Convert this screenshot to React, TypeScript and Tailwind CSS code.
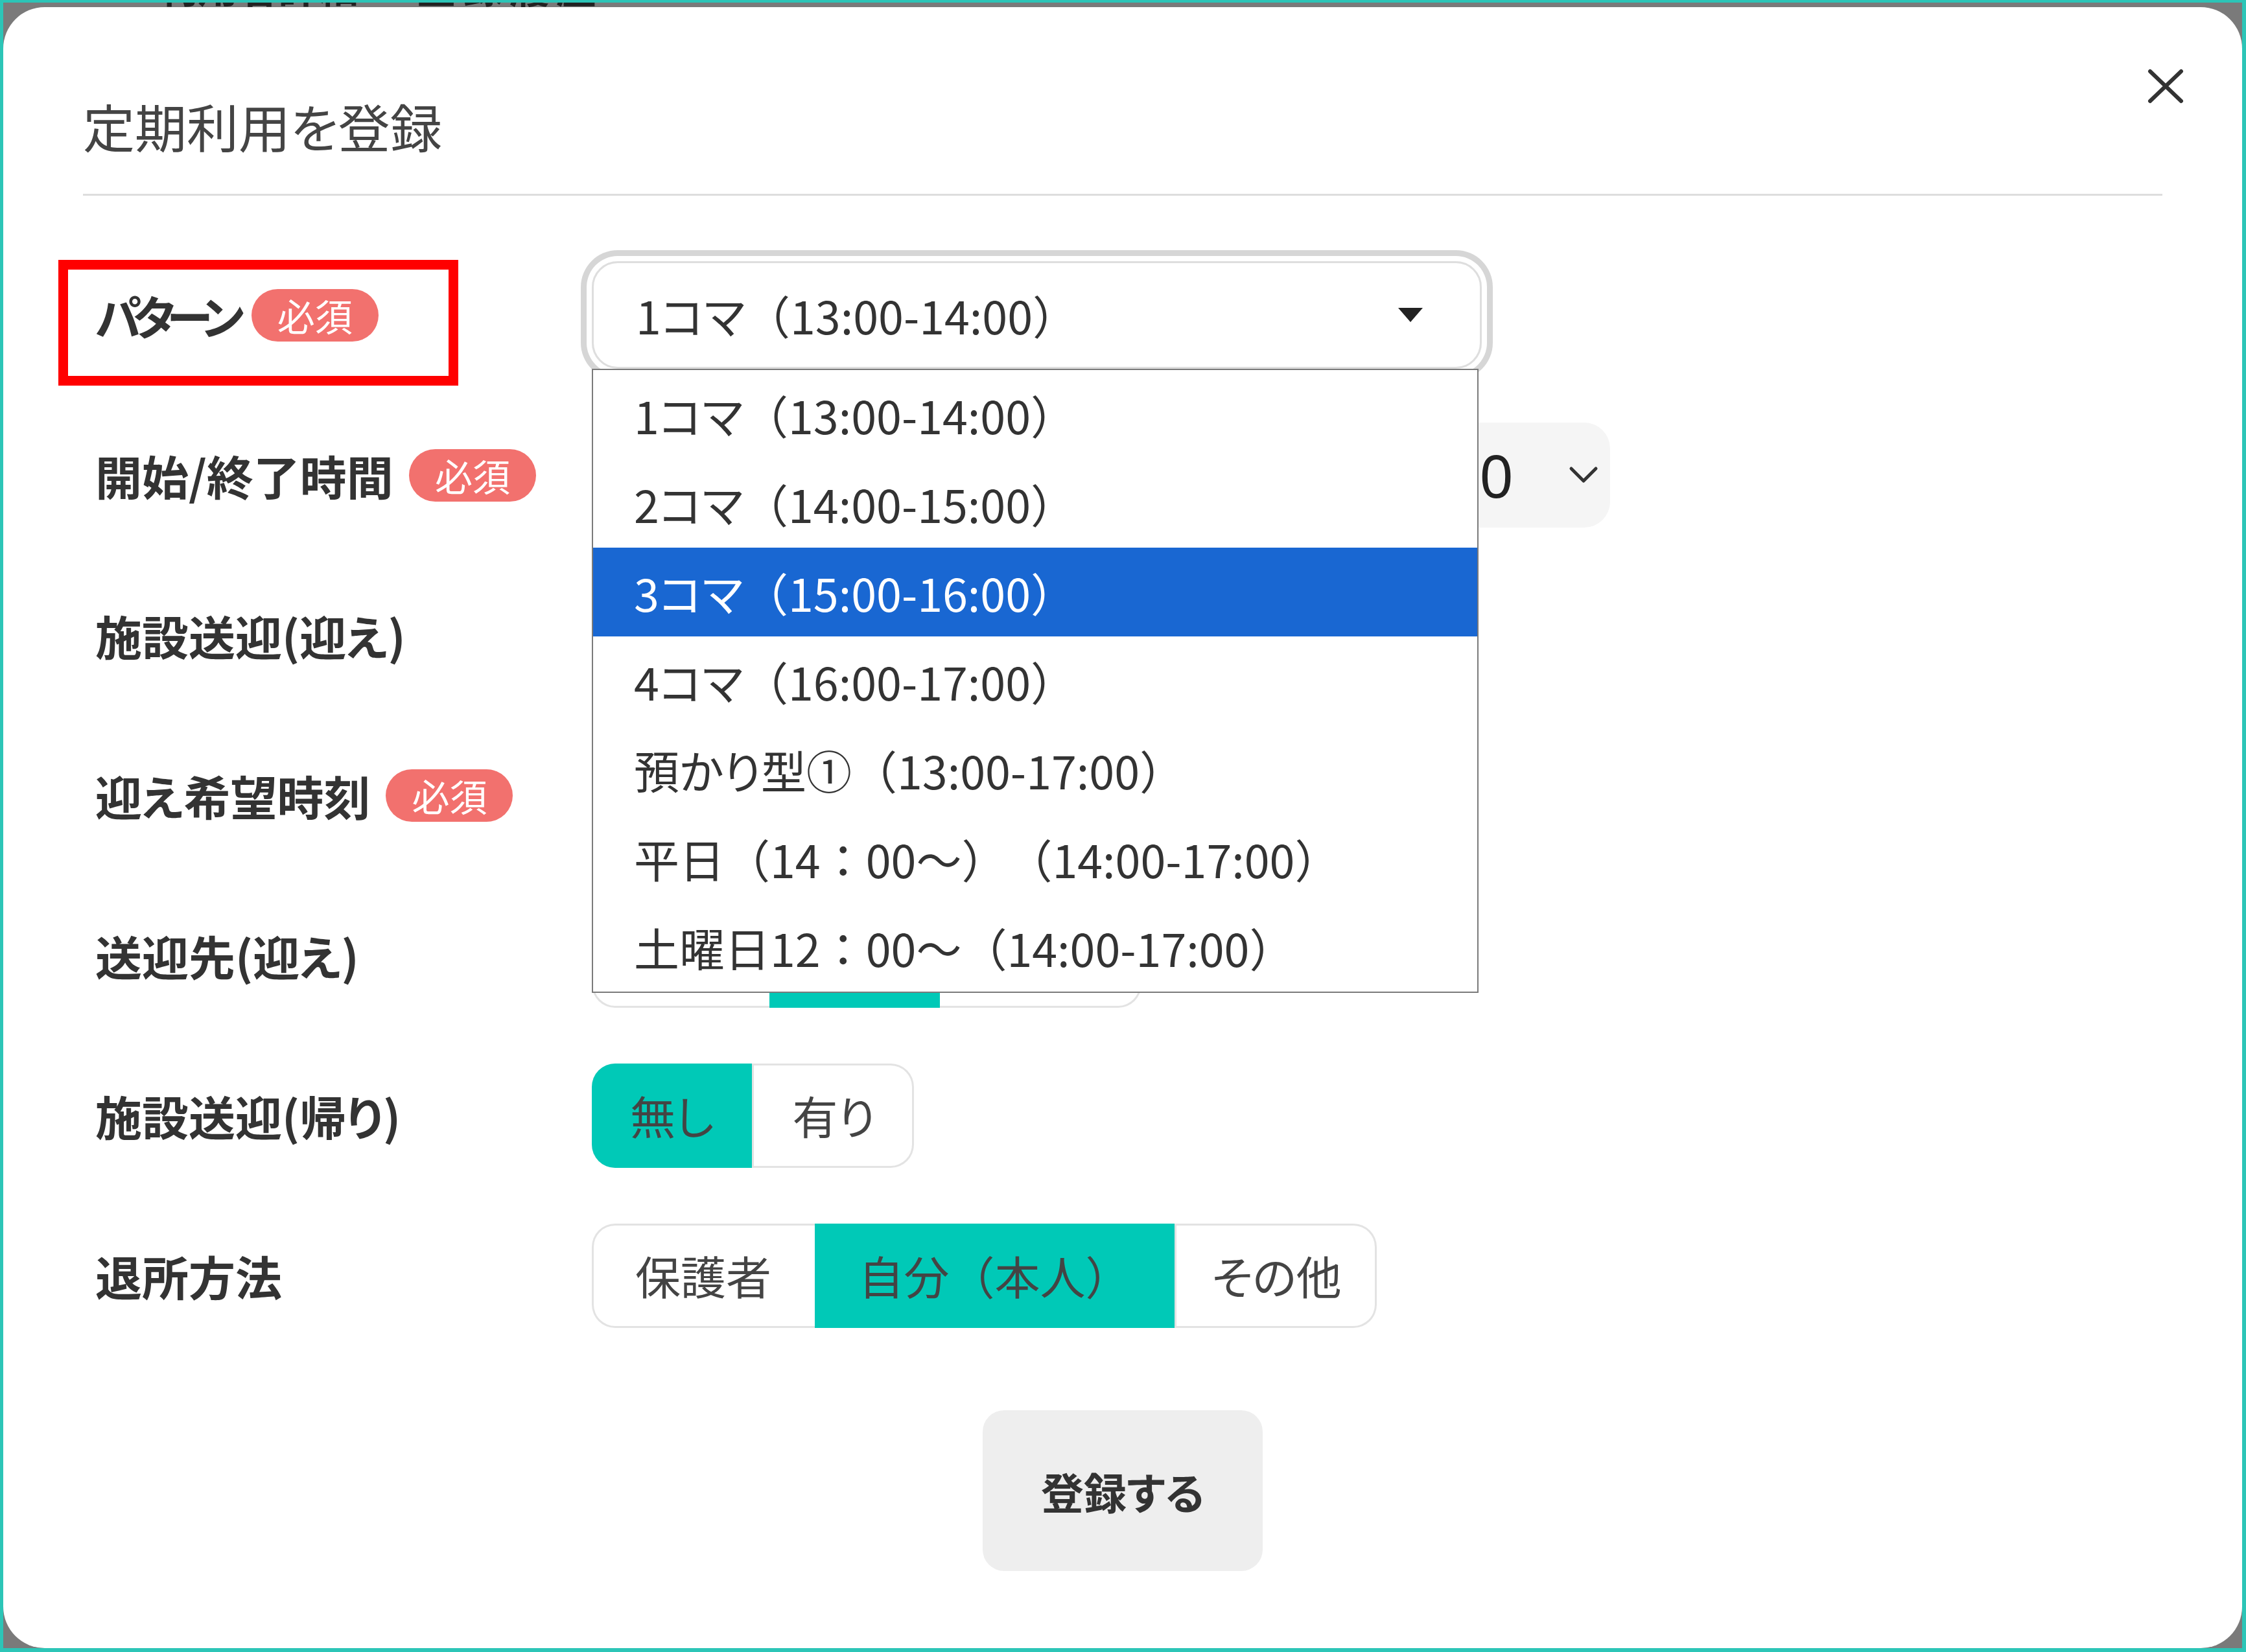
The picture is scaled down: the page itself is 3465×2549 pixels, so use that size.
import type { ReactNode } from "react"

const patterns = [
  "1コマ（13:00-14:00）",
  "2コマ（14:00-15:00）",
  "3コマ（15:00-16:00）",
  "4コマ（16:00-17:00）",
  "預かり型①（13:00-17:00）",
  "平日（14：00～）（14:00-17:00）",
  "土曜日12：00～（14:00-17:00）",
]

// kana get proportional widths (palt), kanji and full-width brackets stay full width
function Jp({ s }: { s: string }) {
  return (
    <>
      {s.split(/([\u3041-\u30ff]+)/).map((part, i) =>
        /^[\u3041-\u30ff]/.test(part) ? (
          <span key={i} className="[font-feature-settings:'palt']">
            {part}
          </span>
        ) : (
          part
        )
      )}
    </>
  )
}

function Row({
  label,
  required,
  tight,
  children,
}: {
  label: string
  required?: boolean
  tight?: boolean
  children: ReactNode
}) {
  return (
    <div className="flex h-[164px] items-center">
      <div className="flex w-[766px] shrink-0 items-center gap-[24px]">
        <span className={"text-[72px] font-bold leading-none text-[#333] " + (tight ? "tracking-[-13px]" : "")}>
          <Jp s={label} />
        </span>
        {required && (
          <span className="flex h-[81px] items-center rounded-full bg-[#f2716e] px-[40px] text-[58px] leading-none text-white">
            必須
          </span>
        )}
      </div>
      <div className="relative flex h-full flex-1 items-center">{children}</div>
    </div>
  )
}

type Seg = { text: string; width: number; active?: boolean; divider?: boolean }

function Segmented({ segs }: { segs: Seg[] }) {
  return (
    <div className="flex h-[161px] overflow-hidden rounded-[36px] shadow-[inset_0_0_0_3px_#e3e3e3]">
      {segs.map((s) => (
        <div
          key={s.text}
          style={{ width: s.width }}
          className={
            "flex items-center justify-center text-[70px] leading-none text-[#444] " +
            (s.active ? "bg-[#00c9b7] text-[#333]" : "") +
            (s.divider ? " border-l-[3px] border-[#e3e3e3]" : "")
          }
        >
          <Jp s={s.text} />
        </div>
      ))}
    </div>
  )
}

function Chevron() {
  return (
    <svg width="46" height="28" viewBox="0 0 46 28" fill="none">
      <path d="M4 4 L23 23 L42 4" stroke="#333" strokeWidth="5" strokeLinecap="round" strokeLinejoin="round" />
    </svg>
  )
}

function TimeBox({ value, width }: { value: string; width: number }) {
  return (
    <div
      style={{ width }}
      className="flex h-[162px] items-center justify-end gap-[85px] rounded-[40px] bg-[#f5f5f5] pr-[18px]"
    >
      <span className="font-['Noto_Sans',sans-serif] text-[92px] leading-none text-[#222]">{value}</span>
      <Chevron />
    </div>
  )
}

function PatternSelect() {
  return (
    <div className="relative h-[166px] w-[1373px]">
      <div className="flex h-full items-center justify-between rounded-[40px] border-[3px] border-[#dedede] pl-[65px] pr-[88px] shadow-[0_0_0_8px_#fff,0_0_0_17px_#d6d6d6]">
        <span className="text-[70px] leading-none text-[#333]">
          <Jp s={patterns[0]} />
        </span>
        <svg width="38" height="22" viewBox="0 0 38 22">
          <polygon points="0,0 38,0 19,22" fill="#222" />
        </svg>
      </div>
      <ul className="absolute left-0 top-[166px] z-10 w-[1368px] border-2 border-[#7a7a7a] bg-white">
        {patterns.map((p, i) => (
          <li
            key={p}
            className={
              "flex h-[137px] items-center pl-[63px] text-[70px] leading-none " +
              (i === 2 ? "bg-[#1967d2] text-white" : "text-[#333]")
            }
          >
            <Jp s={p} />
          </li>
        ))}
      </ul>
    </div>
  )
}

export default function App() {
  return (
    <div className="h-[2549px] w-[3465px] bg-[#2cc5b7] pb-[6px] pl-[5px] pr-[6px] pt-[4px] font-['Noto_Sans_CJK_JP','Noto_Sans',sans-serif] [text-spacing-trim:space-all]">
      <div className="flex h-full flex-col bg-[#7a7a7a]">
        {/* page tabs behind the overlay, only their lower edge shows */}
        <div className="h-[7px] shrink-0 overflow-hidden">
          <div className="-mt-[57px] flex text-[62px] font-bold leading-[62px] text-[#222]">
            <span className="ml-[238px] w-[310px]">利用者詳細</span>
            <span className="ml-[89px] tracking-[10px]">登録履歴</span>
          </div>
        </div>

        <div className="relative flex flex-1 flex-col rounded-[64px] bg-white px-[123px] pt-[134px]">
          <h1 className="text-[80px] font-normal leading-[96px] text-[#444]">
            <Jp s="定期利用を登録" />
          </h1>
          <svg className="absolute right-[90px] top-[95px]" width="56" height="54" viewBox="0 0 56 54">
            <path d="M4 4 L52 50 M52 4 L4 50" stroke="#333" strokeWidth="6" strokeLinecap="round" />
          </svg>

          <div className="mt-[58px] h-[3px] bg-[#dddddd]" />

          <div className="mt-[102px] flex flex-col gap-[83px] pl-[19px]">
            <Row label="パターン" required tight>
              <PatternSelect />
            </Row>
            <Row label="開始/終了時間" required>
              <TimeBox value="13:00" width={620} />
              <span className="w-[196px] text-center text-[70px] text-[#333]">〜</span>
              <TimeBox value="14:00" width={755} />
            </Row>
            <Row label="施設送迎(迎え)">
              <Segmented
                segs={[
                  { text: "無し", width: 247, active: true },
                  { text: "有り", width: 250, divider: true },
                ]}
              />
            </Row>
            <Row label="迎え希望時刻" required>
              <TimeBox value="15:00" width={620} />
            </Row>
            <Row label="送迎先(迎え)">
              <Segmented
                segs={[
                  { text: "自宅", width: 274 },
                  { text: "学校", width: 263, active: true },
                  { text: "その他", width: 311 },
                ]}
              />
            </Row>
            <Row label="施設送迎(帰り)">
              <Segmented
                segs={[
                  { text: "無し", width: 247, active: true },
                  { text: "有り", width: 250, divider: true },
                ]}
              />
            </Row>
            <Row label="退所方法">
              <Segmented
                segs={[
                  { text: "保護者", width: 344 },
                  { text: "自分（本人）", width: 555, active: true },
                  { text: "その他", width: 312, divider: true },
                ]}
              />
            </Row>
          </div>

          <button className="mx-auto mt-[126px] flex h-[248px] w-[432px] items-center justify-center rounded-[33px] bg-[#eeeeee] text-[66px] font-bold text-[#333]">
            <Jp s="登録する" />
          </button>

          {/* red annotation frame */}
          <div className="absolute left-[85px] top-[390px] h-[194px] w-[617px] border-[15px] border-[#ff0000]" />
        </div>
      </div>
    </div>
  )
}
